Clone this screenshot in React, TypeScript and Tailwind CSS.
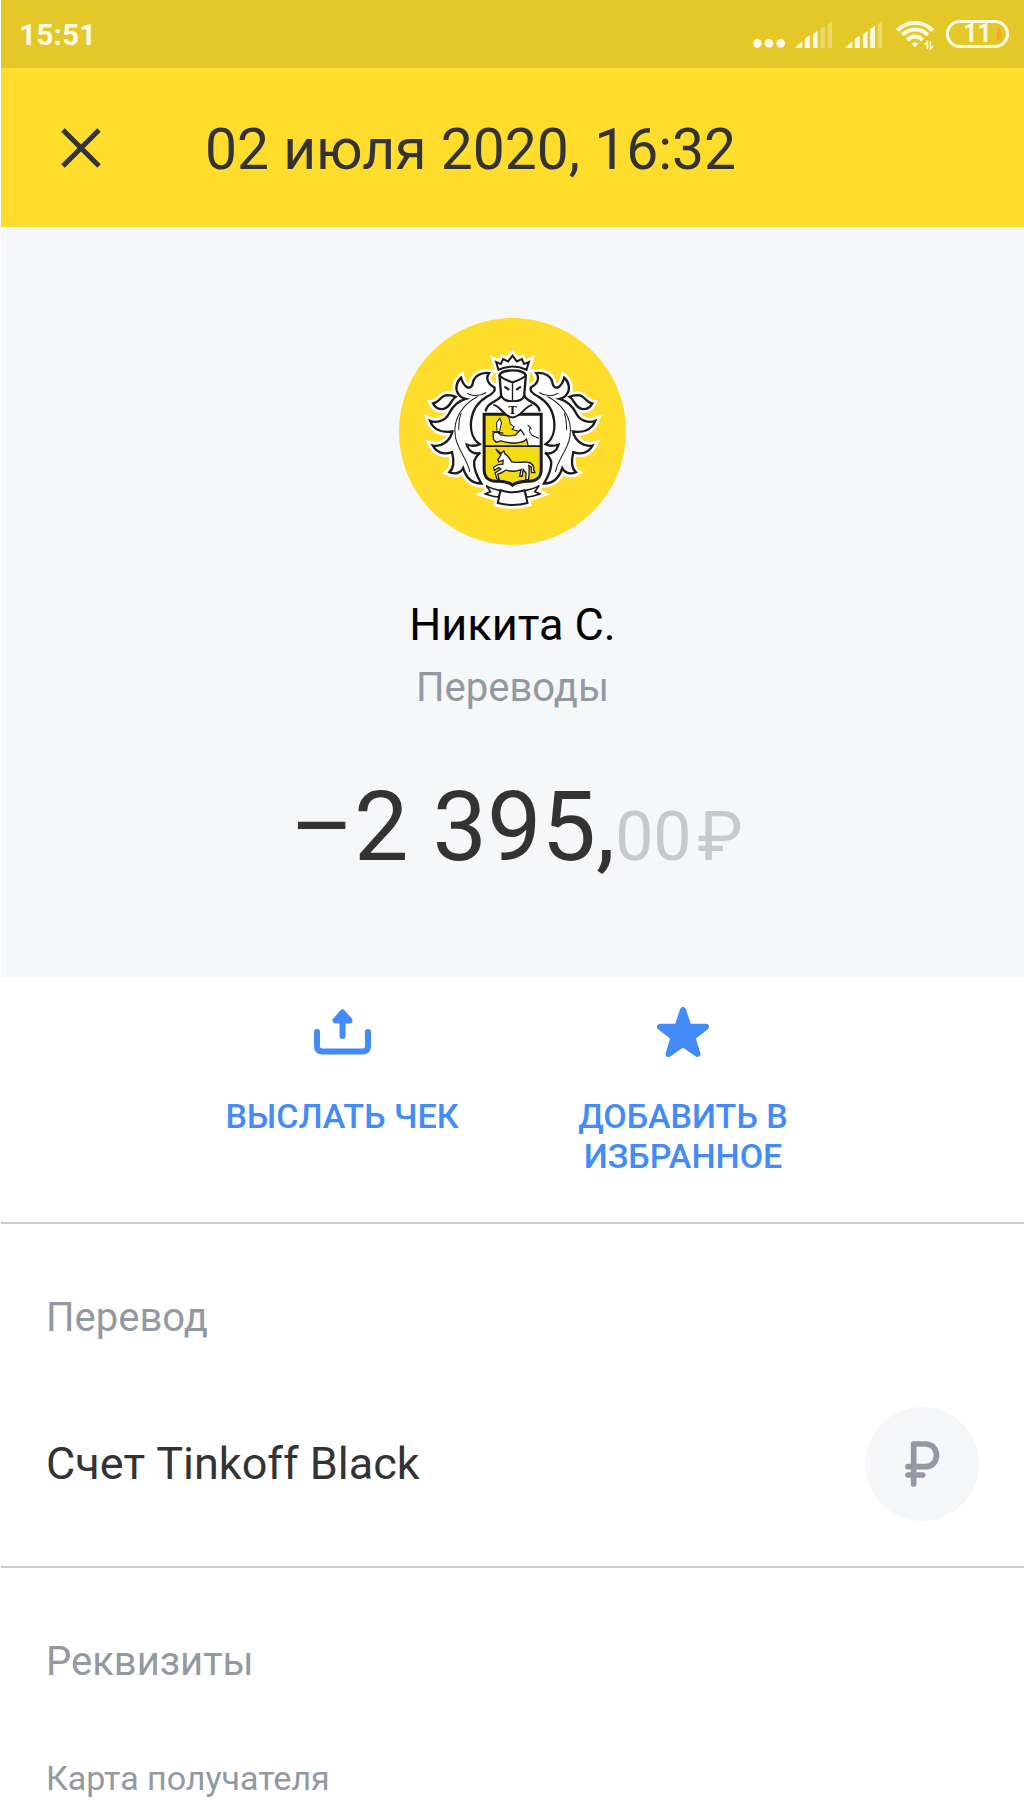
import type { ReactNode } from 'react'

const FOLIAGE =
  'M297 191 C272 188 250 200 247 226 C240 242 222 236 213 205 C198 218 195 240 204 252 C209 262 219 266 227 268 C205 274 188 290 177 312 C164 338 136 340 120 334 C130 362 158 370 187 366 C180 396 152 414 128 408 C140 430 162 436 186 428 C192 452 194 474 178 488 C196 496 212 490 219 476 C228 505 248 522 274 522 C262 502 250 478 252 456 C256 444 262 436 271 430 C252 436 236 426 230 405 C244 410 258 410 269 404 C250 392 240 366 243 335 C247 300 266 276 290 262 C306 254 318 246 313 234 C296 226 284 208 297 191 Z'
const FEATHER = 'M129 282 C148 280 150 258 172 257 C182 257 190 258 197 262 C183 270 180 298 156 299 C144 299 134 292 129 282 Z'
const CROWN = 'M325 181 L318 158 L332 164 L339 149 L354 156 L367 139 L380 156 L395 149 L402 164 L416 158 L409 181 Q367 162 325 181 Z'
const HELMET = 'M328 198 C332 178 402 178 407 198 L402 258 C398 272 380 276 367 276 C354 276 338 272 333 258 Z'
const SHIELD = 'M282 314 H453 V478 C453 506 438 514 416 515 C396 516 378 516 367 527 C356 516 338 516 318 515 C296 514 282 506 282 478 Z'
const RIBBON = 'M331 542 Q367 554 403 542 L412 580 Q367 592 323 580 Z'
const TAIL = 'M331 543 C316 540 300 536 288 528 L301 546 L286 553 C300 558 314 562 326 562 Z'

function Mirrored({ children }: { children: ReactNode }) {
  return (
    <>
      <g>{children}</g>
      <g transform="translate(735 0) scale(-1 1)">{children}</g>
    </>
  )
}

function Crest() {
  return (
    <svg className="size-[227px]" viewBox="27 26 680 680" role="img" aria-label="Tinkoff" strokeLinejoin="miter" strokeLinecap="round">
      <circle cx="367" cy="366" r="340" fill="#ffdd2d" />

      {/* white backing */}
      <g fill="#fff" stroke="#fff" strokeWidth="23">
        <Mirrored>
          <path d={FOLIAGE} />
          <path d={FEATHER} />
          <path d={TAIL} />
        </Mirrored>
        <path d={CROWN} />
        <path d={HELMET} />
        <path d={SHIELD} />
        <path d={RIBBON} />
        <path d="M310 240 H425 L480 300 V500 L430 540 H305 L255 500 V300 Z" />
      </g>

      {/* leaves and ribbon tails */}
      <Mirrored>
        <g fill="#fff" stroke="#1c1a1b" strokeWidth="7">
          <path d={FOLIAGE} />
          <path d={FEATHER} />
          <path d={TAIL} strokeWidth="5" />
        </g>
        <g fill="none" stroke="#1c1a1b" strokeWidth="3">
          <path d="M287 250 C270 260 248 262 232 252" />
          <path d="M262 262 C222 282 186 326 196 382 C202 420 232 450 239 486" />
          <path d="M213 312 C206 328 206 344 206 360" />
        </g>
      </Mirrored>
      <path d={RIBBON} fill="#fff" stroke="#1c1a1b" strokeWidth="6" />

      {/* crown and helmet */}
      <g fill="#fff" stroke="#1c1a1b" strokeWidth="7">
        <path d={CROWN} strokeWidth="6" />
        <path d="M333 258 C326 278 292 276 287 303 M402 258 C408 278 443 276 448 303" />
        <path d={HELMET} />
        <path d="M328 198 C340 210 355 214 367 219 C380 214 396 210 407 198" fill="none" strokeWidth="6" />
        <path d="M367 219 V272" strokeWidth="4" />
        <path d="M345 233 L355 240 M390 233 L380 240" strokeWidth="6" />
      </g>

      {/* shield */}
      <path d={SHIELD} fill="#f2dc12" />
      <path d="M355 317 H451 V410 H413 L410 392 L401 396 L382 388 L388 366 L366 358 L361 344 Z" fill="#fff" />
      <path d="M355 320 L361 344 L372 352 L366 360 L388 366" fill="none" stroke="#1c1a1b" strokeWidth="3" />
      <path d="M309 371 L320 367 L332 376 C348 380 364 380 376 377 L391 360 L402 376 L410 388 L400 396 L382 400 C366 402 346 398 332 394 L318 398 L310 389 Z" fill="#fff" />
      <path
        d="M402 376 L391 360 L376 377 C364 380 348 380 332 376 L320 367 L309 371 L310 389 L318 398 L332 394 C346 398 366 402 382 400 L400 396 L409 389 L414 410"
        fill="none"
        stroke="#1c1a1b"
        strokeWidth="4"
      />
      <path d="M420 352 C414 366 422 378 432 380 L445 386 M413 347 L423 358" fill="none" stroke="#1c1a1b" strokeWidth="3" />
      <path d="M321 366 L319 340 L329 326 L334 340 L328 366 Z" fill="#fff" stroke="#1c1a1b" strokeWidth="3" />
      <path d="M308 366 L338 371" stroke="#1c1a1b" strokeWidth="4" />
      <path d="M283 410 H452" stroke="#1c1a1b" strokeWidth="5" />

      {/* unicorn */}
      <path
        d="M317 419 L333 432 L341 424 L345 434 C356 439 359 450 365 457 C381 462 397 455 412 458 C426 459 432 470 430 480 L434 489 L424 489 L423 472 L416 468 C418 482 417 494 415 510 L406 510 L408 491 L399 480 L396 500 L388 500 L393 480 C378 486 360 486 347 482 L333 490 L323 494 L327 510 L320 507 L315 490 L332 479 L326 474 L313 482 L310 474 L324 465 L338 464 L339 452 L326 457 L323 451 L332 437 Z"
        fill="#fff"
        stroke="#1c1a1b"
        strokeWidth="4"
      />
      <path d={SHIELD} fill="none" stroke="#1c1a1b" strokeWidth="9" />

      {/* bib with the letter */}
      <path d="M333 278 L402 278 L424 286 C402 292 394 322 367 324 C341 322 334 292 312 286 Z" fill="#fff" />
      <path d="M312 287 C334 292 341 322 367 324 C394 322 402 292 424 287" fill="none" stroke="#1c1a1b" strokeWidth="6" />
      <text x="367" y="314" textAnchor="middle" fill="#1c1a1b" className="font-['DejaVu_Serif',serif] text-[34px] font-bold">
        T
      </text>
    </svg>
  )
}

function Signal({ level }: { level: number }) {
  const bars = ['M0 80 L22 60 V80 Z', 'M29 80 V53 L44 43 V80 Z', 'M53 80 V40 L67 29 V80 Z', 'M75 80 V24 L89 14 V80 Z', 'M97 80 V10 L110 0 V80 Z']
  return (
    <svg className="h-[27px] w-[37px]" viewBox="0 0 110 80" fill="#fffbe6">
      {bars.map((d, i) => (
        <path key={d} d={d} opacity={i < level ? 1 : 0.35} />
      ))}
    </svg>
  )
}

function StatusBar() {
  return (
    <div className="flex h-[68px] items-center justify-between bg-[#e4c728] pr-[15px] pl-[18px] text-[#fffbe6]">
      <span className="pt-0.5 text-[30px] leading-9 font-bold">15:51</span>
      <div className="flex items-center">
        <svg className="mt-[18px] mr-[10px] h-[9px] w-8" viewBox="0 0 96 27" fill="currentColor">
          <circle cx="13" cy="13" r="13" />
          <circle cx="48" cy="13" r="13" />
          <circle cx="83" cy="13" r="13" />
        </svg>
        <div className="mr-[14px] flex gap-[13px]">
          <Signal level={3} />
          <Signal level={4} />
        </div>
        <svg className="mt-0.5 mr-3 h-[31px] w-[38px]" viewBox="0 0 114 93" fill="none" stroke="currentColor" strokeWidth="12">
          <path d="M4 32 C34 0 80 0 110 32" />
          <path d="M19 45 C42 23 72 23 95 45" />
          <path d="M34 60 C48 46 66 46 80 60" />
          <path d="M47 72 Q57 62 67 72 L57 82 Z" fill="currentColor" stroke="none" />
          <path d="M94 88 V66 L86 74 M103 64 V86 L111 78" strokeWidth="5" />
        </svg>
        <div className="relative flex h-7 w-[63px] items-center justify-center rounded-full border-[3px] border-[#fffbe6]">
          <span className="text-[25px] leading-6 font-bold">11</span>
          <svg className="absolute right-1 h-3 w-[5px]" viewBox="0 0 5 12" fill="#f9a825">
            <path d="M0 0 H2 C6 3 6 9 2 12 H0 Z" />
          </svg>
        </div>
      </div>
    </div>
  )
}

function Action({ icon, label }: { icon: ReactNode; label: string }) {
  return (
    <button className="flex w-1/3 flex-col items-center gap-10 px-10 text-[34px] leading-10 font-medium text-[#428bf9] uppercase">
      <span className="flex h-12 items-center">{icon}</span>
      {label}
    </button>
  )
}

export default function App() {
  return (
    <div className="border-l border-white bg-white font-[Roboto,sans-serif] text-[#333]">
      <StatusBar />
      <header className="flex h-[159px] items-center bg-[#ffdd2d] pl-[60px]">
        <button aria-label="Закрыть">
          <svg className="size-10" viewBox="0 0 120 120" stroke="#333" strokeWidth="15">
            <path d="M6 6 L114 114 M114 6 L6 114" />
          </svg>
        </button>
        <h1 className="ml-[104px] pt-1 text-[57px] leading-[64px]">02 июля 2020, 16:32</h1>
      </header>

      <section className="flex flex-col items-center bg-[#f5f7f8] pt-[91px] pb-[94px]">
        <Crest />
        <h2 className="mt-[52px] text-[45px] leading-[56px] text-black">Никита С.</h2>
        <p className="mt-[11px] text-[40px] leading-[48px] text-[#9299a2]">Переводы</p>
        <p className="mt-[59px] pl-2 text-[97px] leading-[112px]">
          –2 395,
          <span className="text-[68px] leading-none text-[#c7c9cc]">
            00<span className="ml-1.5">₽</span>
          </span>
        </p>
      </section>

      <div className="flex items-start justify-center border-b-2 border-[#c8cacb] pt-[31px] pb-[46px]">
        <Action
          label="Выслать чек"
          icon={
            <svg className="h-[46px] w-[57px]" viewBox="0 0 57 46" fill="none" stroke="currentColor" strokeWidth="6" strokeLinecap="round" strokeLinejoin="round">
              <path d="M3 23 V37 Q3 42.5 8.5 42.5 H48.5 Q54 42.5 54 37 V23" />
              <path d="M28.5 27 V8" />
              <path d="M28.5 3.5 L21.5 11.5 H35.5 Z" fill="currentColor" />
            </svg>
          }
        />
        <Action
          label="Добавить в избранное"
          icon={
            <svg className="h-[50px] w-[52px]" viewBox="0 0 52 50" fill="currentColor" stroke="currentColor" strokeWidth="6" strokeLinejoin="round">
              <path d="M26 3 L31.5 19.5 L49 19.8 L35.500 30.5 L40.5 47 L26 37 L11.5 47 L16.5 30.5 L3 19.8 L20.5 19.5 Z" />
            </svg>
          }
        />
      </div>

      <section className="border-b-2 border-[#c8c9ce] px-[45px] pt-[70px] pb-[45px]">
        <h3 className="text-[40px] leading-[48px] text-[#9299a2]">Перевод</h3>
        <div className="mt-[65px] flex items-center justify-between">
          <span className="text-[45px] leading-[56px]">Счет Tinkoff Black</span>
          <span className="flex size-[114px] items-center justify-center rounded-full bg-[#f5f7f8]">
            <svg className="h-[46px] w-[35px]" viewBox="0 0 105 138" fill="none" stroke="#9299a2" strokeWidth="17" strokeLinecap="round" strokeLinejoin="round">
              <path d="M26 129 V9 H62 C105 9 105 77 62 77 H9 M9 102 H53" />
            </svg>
          </span>
        </div>
      </section>

      <section className="px-[45px] pt-[70px] pb-[21px]">
        <h3 className="text-[40px] leading-[48px] text-[#9299a2]">Реквизиты</h3>
        <p className="mt-[72px] text-[34px] leading-10 text-[#9299a2]">Карта получателя</p>
      </section>
    </div>
  )
}
